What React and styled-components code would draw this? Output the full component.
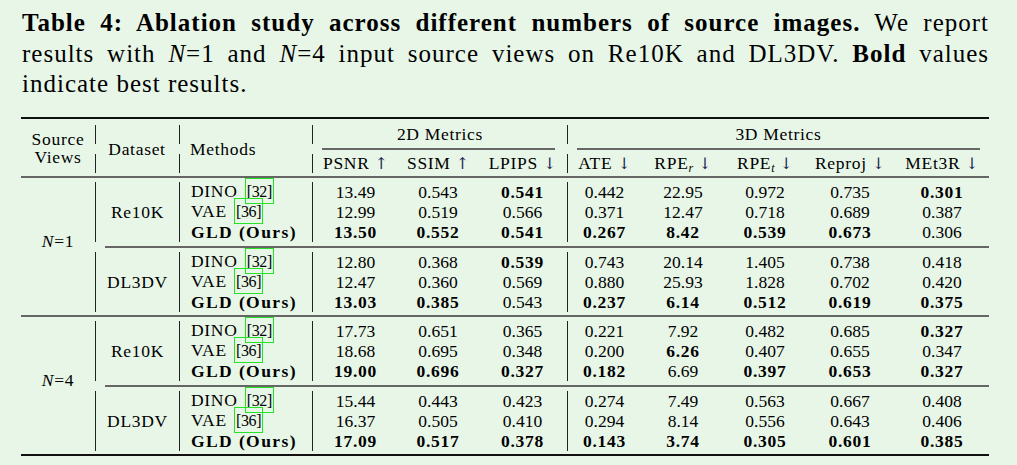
import React from "react";
import styled, { createGlobalStyle } from "styled-components";

const GlobalStyle = createGlobalStyle`
  html { background: #e8f6e8; }
  body {
    margin: 8px;
    background: #e8f6e8;
    color: #000;
    font-family: "Liberation Serif", "Times New Roman", serif;
  }
`;

const COLS = "74px 84px 133px 86px 80px 89px 74px 84px 80px 90px 94px";

const Page = styled.main`
  padding-left: 13px;
  width: 968px;
`;

const Caption = styled.div`
  margin-left: 1px;
  width: 967px;
  font-size: 25px;
  line-height: 30.5px;
  letter-spacing: 0.04em;
`;

const CaptionLine = styled.div`
  text-align: ${(p) => (p.$last ? "left" : "justify")};
  text-align-last: ${(p) => (p.$last ? "left" : "justify")};
`;

const Table = styled.section`
  margin-top: 17px;
  width: 968px;
  font-size: 17.5px;
  letter-spacing: 0.04em;
  display: flex;
  flex-direction: column;
`;

const RULES = {
  top: { color: "#111", margin: "0 0 6px 0" },
  mid: { color: "#666", margin: "3px 0 4px 0" },
  bottom: { color: "#111", margin: "3px 0 0 0" },
};

const Rule = styled.div`
  height: 2px;
  background: ${(p) => RULES[p.$kind].color};
  margin: ${(p) => RULES[p.$kind].margin};
`;

const Band = styled.div`
  display: grid;
  grid-template-columns: ${COLS};
  grid-template-rows: ${(p) => p.$rows};
`;

const Cell = styled.div`
  grid-column: ${(p) => p.$col};
  grid-row: ${(p) => p.$row};
  border-left: ${(p) => (p.$bar ? "1px solid #222" : "none")};
  display: flex;
  align-items: center;
  justify-content: ${(p) => (p.$left ? "flex-start" : "center")};
  padding-left: ${(p) => (p.$left ? "11px" : "0")};
  padding-bottom: ${(p) => (p.$lift ? `${p.$lift}px` : "0")};
  line-height: 20px;
  white-space: nowrap;
  font-weight: ${(p) => (p.$bold ? 700 : 400)};
  letter-spacing: ${(p) =>
    p.$num && !p.$bold ? "0" : p.$left && p.$bold ? "0.08em" : "0.04em"};
`;

const HeadStack = styled.div`
  line-height: 18px;
  text-align: center;
  padding-bottom: 2px;
`;

const CMidRule = styled.div`
  grid-column: ${(p) => p.$col};
  grid-row: ${(p) => p.$row};
  align-self: start;
  height: 2px;
  margin: 4px ${(p) => p.$r}px 0 ${(p) => p.$l}px;
  background: #666;
`;

const Label = styled.span``;

const Cite = styled.span`
  margin-left: 3px;
  padding: 4px 1px 3px;
  font-size: 16px;
  letter-spacing: -0.3px;
  font-weight: 400;
  outline: 1px solid #26e226;
`;

const Sub = styled.sub`
  font-size: 12px;
  font-style: italic;
  vertical-align: -3px;
  line-height: 0;
  letter-spacing: 0;
`;

const Arrow = styled.span`
  margin-left: 5px;
  font-family: "DejaVu Serif", "DejaVu Sans", serif;
  font-size: 16px;
  letter-spacing: 0;
  color: #18224f;
`;

const Var = styled.i`
  font-style: italic;
`;

const groups = [
  {
    n: 1,
    subs: [
      {
        ds: "Re10K",
        rows: [
          ["DINO", 32, ["13.49", "0.543", "*0.541", "0.442", "22.95", "0.972", "0.735", "*0.301"]],
          ["VAE", 36, ["12.99", "0.519", "0.566", "0.371", "12.47", "0.718", "0.689", "0.387"]],
          ["GLD (Ours)", null, ["*13.50", "*0.552", "*0.541", "*0.267", "*8.42", "*0.539", "*0.673", "0.306"]],
        ],
      },
      {
        ds: "DL3DV",
        rows: [
          ["DINO", 32, ["12.80", "0.368", "*0.539", "0.743", "20.14", "1.405", "0.738", "0.418"]],
          ["VAE", 36, ["12.47", "0.360", "0.569", "0.880", "25.93", "1.828", "0.702", "0.420"]],
          ["GLD (Ours)", null, ["*13.03", "*0.385", "0.543", "*0.237", "*6.14", "*0.512", "*0.619", "*0.375"]],
        ],
      },
    ],
  },
  {
    n: 4,
    subs: [
      {
        ds: "Re10K",
        rows: [
          ["DINO", 32, ["17.73", "0.651", "0.365", "0.221", "7.92", "0.482", "0.685", "*0.327"]],
          ["VAE", 36, ["18.68", "0.695", "0.348", "0.200", "*6.26", "0.407", "0.655", "0.347"]],
          ["GLD (Ours)", null, ["*19.00", "*0.696", "*0.327", "*0.182", "6.69", "*0.397", "*0.653", "*0.327"]],
        ],
      },
      {
        ds: "DL3DV",
        rows: [
          ["DINO", 32, ["15.44", "0.443", "0.423", "0.274", "7.49", "0.563", "0.667", "0.408"]],
          ["VAE", 36, ["16.37", "0.505", "0.410", "0.294", "8.14", "0.556", "0.643", "0.406"]],
          ["GLD (Ours)", null, ["*17.09", "*0.517", "*0.378", "*0.143", "*3.74", "*0.305", "*0.601", "*0.385"]],
        ],
      },
    ],
  },
];

const metrics = [
  { name: "PSNR", up: true },
  { name: "SSIM", up: true },
  { name: "LPIPS" },
  { name: "ATE" },
  { name: "RPE", sub: "r" },
  { name: "RPE", sub: "t" },
  { name: "Reproj" },
  { name: "MEt3R" },
];

const hasBar = (col) => col === 2 || col === 3 || col === 4 || col === 7;

function Header() {
  return (
    <Band $rows="19px 10px 19px">
      <Cell $col="2" $row="1" $bar />
      <Cell $col="3" $row="1" $bar />
      <Cell $col="2" $row="3" $bar />
      <Cell $col="3" $row="3" $bar />
      <Cell $col="1" $row="1 / 4">
        <HeadStack>
          Source
          <br />
          Views
        </HeadStack>
      </Cell>
      <Cell $col="2" $row="1 / 4">Dataset</Cell>
      <Cell $col="3" $row="1 / 4" $left>
        Methods
      </Cell>
      <Cell $col="4 / 7" $row="1" $bar>
        2D Metrics
      </Cell>
      <Cell $col="7 / 12" $row="1" $bar>
        3D Metrics
      </Cell>
      <CMidRule $col="4 / 7" $row="2" $l={10} $r={12} />
      <CMidRule $col="7 / 12" $row="2" $l={10} $r={9} />
      {metrics.map((m, i) => (
        <Cell key={i} $col={`${4 + i}`} $row="3" $bar={hasBar(4 + i)}>
          <Label>
            {m.name}
            {m.sub ? <Sub>{m.sub}</Sub> : null}
            <Arrow>{m.up ? "↑" : "↓"}</Arrow>
          </Label>
        </Cell>
      ))}
    </Band>
  );
}

function Group({ group }) {
  const items = [
    <Cell key="n" $col="1" $row="1 / 8" $lift={12}>
      <Label>
        <Var>N</Var>={group.n}
      </Label>
    </Cell>,
    <CMidRule key="cm" $col="2 / 12" $row="4" $l={10} $r={0} />,
  ];
  group.subs.forEach((sub, si) => {
    const base = si * 4 + 1;
    items.push(
      <Cell key={`ds${si}`} $col="2" $row={`${base} / ${base + 3}`} $bar>
        {sub.ds}
      </Cell>
    );
    sub.rows.forEach(([method, cite, vals], ri) => {
      const row = `${base + ri}`;
      items.push(
        <Cell key={`m${si}${ri}`} $col="3" $row={row} $bar $left $bold={!cite}>
          <Label>
            {method}
            {cite ? " " : null}
            {cite ? <Cite>[{cite}]</Cite> : null}
          </Label>
        </Cell>
      );
      vals.forEach((v, vi) => {
        const col = 4 + vi;
        const bold = v.startsWith("*");
        items.push(
          <Cell
            key={`v${si}${ri}${vi}`}
            $col={`${col}`}
            $row={row}
            $bar={hasBar(col)}
            $bold={bold}
            $num
          >
            {bold ? v.slice(1) : v}
          </Cell>
        );
      });
    });
  });
  return <Band $rows="20px 20px 20px 10px 20px 20px 20px">{items}</Band>;
}

export default function App() {
  return (
    <>
      <GlobalStyle />
      <Page>
        <Caption>
          <CaptionLine>
            <b>Table 4: Ablation study across different numbers of source images.</b> We report
          </CaptionLine>
          <CaptionLine>
            results with <Var>N</Var>=1 and <Var>N</Var>=4 input source views on Re10K and DL3DV.{" "}
            <b>Bold</b> values
          </CaptionLine>
          <CaptionLine $last>indicate best results.</CaptionLine>
        </Caption>
        <Table>
          <Rule $kind="top" />
          <Header />
          <Rule $kind="mid" />
          <Group group={groups[0]} />
          <Rule $kind="mid" />
          <Group group={groups[1]} />
          <Rule $kind="bottom" />
        </Table>
      </Page>
    </>
  );
}
